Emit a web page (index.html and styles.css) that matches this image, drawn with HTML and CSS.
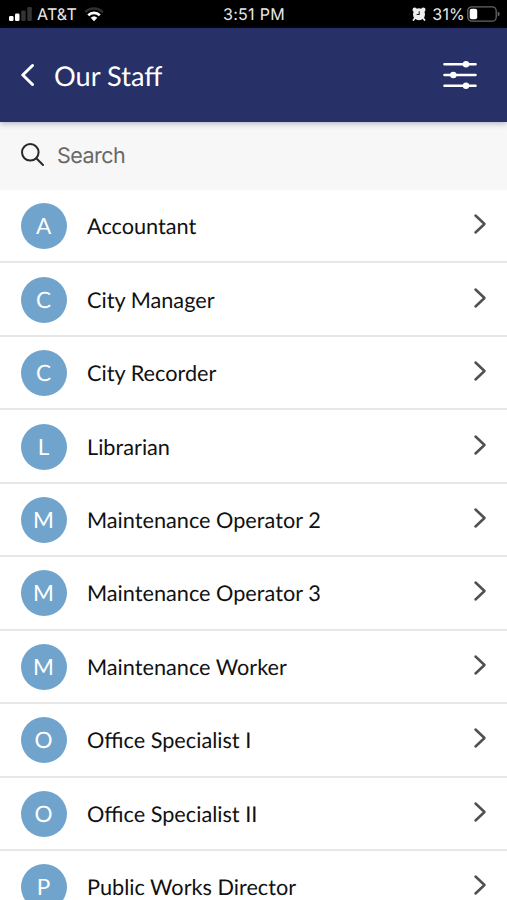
FILE: index.html
```html
<!DOCTYPE html>
<html lang="en">
<head>
<meta charset="utf-8">
<title>Our Staff</title>
<link rel="stylesheet" href="styles.css">
</head>
<body>
<div class="status">
  <div class="status-left">
    <svg class="signal" width="23" height="14" viewBox="0 0 23 14"><rect x="0" y="9" width="4.5" height="5" rx="1.2" fill="#fff"/><rect x="6" y="6.5" width="4.5" height="7.5" rx="1.2" fill="#fff"/><rect x="12.2" y="3.5" width="4.5" height="10.5" rx="1.2" fill="#333"/><rect x="18.3" y="0" width="4.500" height="14" rx="1.2" fill="#333"/></svg>
    <span class="carrier">AT&amp;T</span>
    <svg class="wifi" width="20" height="15" viewBox="0 0 20 15" fill="none"><path d="M1.2 5.2a12.5 12.5 0 0 1 17.6 0" stroke="#303030" stroke-width="2.5"/><path d="M4.2 8.2a8.3 8.3 0 0 1 11.6 0" stroke="#fff" stroke-width="2.6"/><path d="M6.700 10.800a4.900 4.900 0 0 1 6.600 0L10 14.200z" fill="#fff"/></svg>
  </div>
  <span class="time">3:51 PM</span>
  <div class="status-right">
    <svg class="alarm" width="14" height="14" viewBox="0 0 14 14"><path d="M3 11L1.5 13M11 11l1.500 2" stroke="#eee" stroke-width="1.8" stroke-linecap="round"/><circle cx="2.700" cy="2.700" r="2.200" fill="#eee"/><circle cx="11.300" cy="2.700" r="2.200" fill="#eee"/><circle cx="7" cy="7.300" r="6" fill="#eee"/><path d="M7.200 4.200v3.300H4.600" fill="none" stroke="#222" stroke-width="1.100"/></svg>
    <span class="percent">31%</span>
    <svg class="battery" width="33" height="16" viewBox="0 0 33 16"><rect x=".8" y=".8" width="28.400" height="14.400" rx="4" fill="none" stroke="#666" stroke-width="1.300"/><rect x="2.700" y="2.700" width="7.500" height="10.600" rx="2" fill="#fff"/><path d="M30.700 5.500q2 .7 2 2.500t-2 2.500z" fill="#666"/></svg>
  </div>
</div>
<header class="header">
  <svg class="back" width="14" height="24" viewBox="0 0 14 24"><path d="M12.500 2.500L2.800 12l9.700 9.500" fill="none" stroke="#fff" stroke-width="3" stroke-linecap="round" stroke-linejoin="round"/></svg>
  <h1 class="title">Our Staff</h1>
  <svg class="filter" width="34" height="30" viewBox="0 0 34 30" fill="#fff"><path d="M1.500 4.200h31M1.500 15h31M1.500 25.700h31" stroke="#fff" stroke-width="2.600" stroke-linecap="round"/><circle cx="23" cy="4.200" r="3.200"/><circle cx="10.300" cy="15" r="3.200"/><circle cx="23" cy="25.700" r="3.200"/></svg>
</header>
<div class="search">
  <svg width="24" height="24" viewBox="0 0 24 24" fill="none" stroke="#292929" stroke-width="2" stroke-linecap="round"><circle cx="9.300" cy="9.300" r="8.300"/><path d="M15.300 15.300l6.700 6.700"/></svg>
  <span class="placeholder">Search</span>
</div>
<ul class="list">
  <li class="row"><span class="avatar">A</span><span class="name">Accountant</span><svg class="chevron" viewBox="0 0 14 22"><path d="M2.500 2.500l9 8.500-9 8.500"/></svg></li>
  <li class="row"><span class="avatar">C</span><span class="name">City Manager</span><svg class="chevron" viewBox="0 0 14 22"><path d="M2.500 2.500l9 8.500-9 8.500"/></svg></li>
  <li class="row"><span class="avatar">C</span><span class="name">City Recorder</span><svg class="chevron" viewBox="0 0 14 22"><path d="M2.500 2.500l9 8.500-9 8.500"/></svg></li>
  <li class="row"><span class="avatar">L</span><span class="name">Librarian</span><svg class="chevron" viewBox="0 0 14 22"><path d="M2.500 2.500l9 8.500-9 8.500"/></svg></li>
  <li class="row"><span class="avatar">M</span><span class="name">Maintenance Operator 2</span><svg class="chevron" viewBox="0 0 14 22"><path d="M2.500 2.500l9 8.500-9 8.500"/></svg></li>
  <li class="row"><span class="avatar">M</span><span class="name">Maintenance Operator 3</span><svg class="chevron" viewBox="0 0 14 22"><path d="M2.500 2.500l9 8.500-9 8.500"/></svg></li>
  <li class="row"><span class="avatar">M</span><span class="name">Maintenance Worker</span><svg class="chevron" viewBox="0 0 14 22"><path d="M2.500 2.500l9 8.500-9 8.500"/></svg></li>
  <li class="row"><span class="avatar">O</span><span class="name">Office Specialist I</span><svg class="chevron" viewBox="0 0 14 22"><path d="M2.500 2.500l9 8.500-9 8.500"/></svg></li>
  <li class="row"><span class="avatar">O</span><span class="name">Office Specialist II</span><svg class="chevron" viewBox="0 0 14 22"><path d="M2.500 2.500l9 8.500-9 8.500"/></svg></li>
  <li class="row"><span class="avatar">P</span><span class="name">Public Works Director</span><svg class="chevron" viewBox="0 0 14 22"><path d="M2.500 2.500l9 8.500-9 8.500"/></svg></li>
</ul>
</body>
</html>
```
FILE: styles.css
```css
* { box-sizing: border-box; }
html, body { height: 100%; }
body {
  margin: 0;
  overflow: hidden;
  background: #fff;
  color: #111;
  font-family: Lato, sans-serif;
  text-rendering: geometricPrecision;
  display: flex;
  flex-direction: column;
}
svg { display: block; flex: none; }
.status {
  flex: none;
  height: 28px;
  padding: 0 7px 0 9px;
  display: grid;
  grid-template-columns: 1fr auto 1fr;
  align-items: center;
  background: #000;
  color: #e8e8e8;
  font: 16px/28px Inter, sans-serif;
}
.status-left, .status-right { display: flex; align-items: center; }
.status-right { justify-content: flex-end; }
.carrier { margin: 0 7px 0 5px; letter-spacing: .2px; }
.wifi { margin-top: 1px; }
.time { letter-spacing: .3px; margin-right: 1px; }
.percent { margin: 0 2px 0 6px; letter-spacing: .2px; }
.header {
  flex: none;
  position: relative;
  height: 94px;
  padding: 0 30px 0 20px;
  display: flex;
  align-items: center;
  background: #273167;
  color: #fff;
  box-shadow: 0 1px 6px rgba(39, 49, 103, .4);
}
.title {
  flex: 1;
  margin: 1px 0 0 20px;
  font-size: 27.200px;
  font-weight: 400;
  line-height: 34px;
}
.search {
  flex: none;
  height: 67.500px;
  padding: 0 21px 2px;
  display: flex;
  align-items: center;
  background: #f7f7f7;
}
.placeholder {
  margin: 2px 0 0 12px;
  color: #686868;
  font: 21.500px/30px Inter, sans-serif;
  letter-spacing: -.55px;
}
.list {
  flex: none;
  margin: 0;
  padding: .5px 0 0;
  list-style: none;
}
.row {
  height: 73.460px;
  padding: 0 20px 0 21px;
  display: flex;
  align-items: center;
  border-bottom: 2px solid #e7e7e7;
}
.avatar {
  width: 46px;
  height: 46px;
  margin-top: 1px;
  padding-right: 1px;
  border-radius: 50%;
  background: #70a4cc;
  color: #fff;
  font-size: 22.500px;
  line-height: 46px;
  text-align: center;
}
.name {
  flex: 1;
  margin: 1px 0 0 20px;
  font-size: 21.700px;
  line-height: 30px;
}
.chevron {
  width: 14px;
  height: 22px;
  margin-top: -3px;
  fill: none;
  stroke: #505050;
  stroke-width: 2.500;
  stroke-linecap: round;
  stroke-linejoin: round;
}
```
